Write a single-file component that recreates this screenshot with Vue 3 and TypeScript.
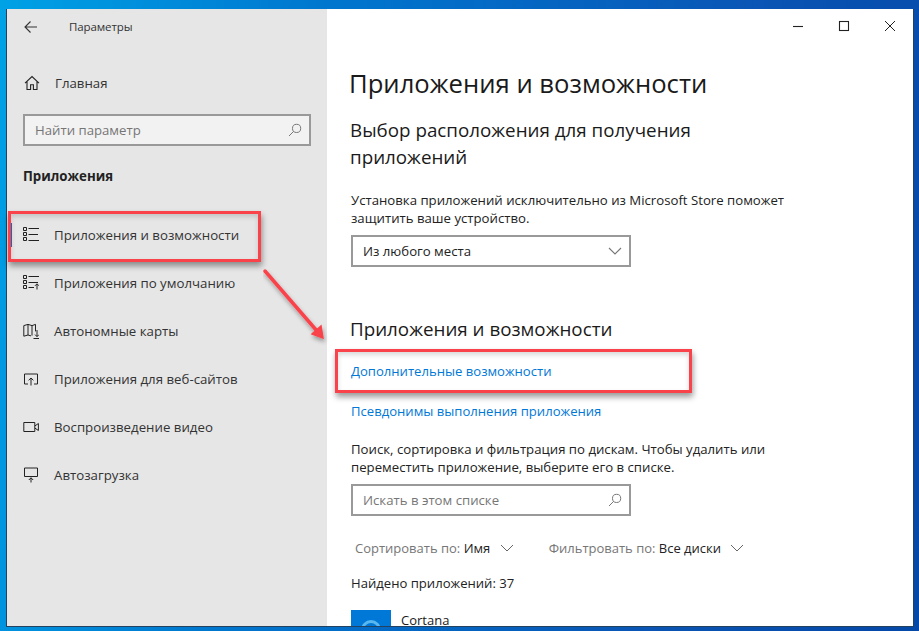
<script setup lang="ts">
const nav = [
  { label: 'Приложения и возможности', icon: 'list', active: true },
  { label: 'Приложения по умолчанию', icon: 'defaults', active: false },
  { label: 'Автономные карты', icon: 'map', active: false },
  { label: 'Приложения для веб-сайтов', icon: 'web', active: false },
  { label: 'Воспроизведение видео', icon: 'video', active: false },
  { label: 'Автозагрузка', icon: 'startup', active: false },
]
</script>

<template>
  <div class="desktop">
    <div class="window">
      <aside class="side">
        <div class="titlebar">
          <svg class="back" width="16" height="14" viewBox="0 0 16 14" fill="none" stroke="#333" stroke-width="1.1"><path d="M14 7H2M7.5 1.5 2 7l5.5 5.5" /></svg>
          <span class="apptitle">Параметры</span>
        </div>
        <div class="home">
          <svg class="ico" width="16" height="16" viewBox="0 0 16 16" fill="none" stroke="#222" stroke-width="1.1"><path d="M1 8.2 8 1.6l7 6.6M3 6.5V14.5h3.6V9.8h2.8v4.7H13V6.5" /></svg>
          <span>Главная</span>
        </div>
        <div class="search side-search">
          <span class="ph">Найти параметр</span>
          <svg width="14" height="14" viewBox="0 0 14 14" fill="none" stroke="#777" stroke-width="1"><circle cx="8.6" cy="5.4" r="4.1" /><path d="M5.7 8.3 1 13" /></svg>
        </div>
        <div class="group">Приложения</div>
        <nav class="nav">
          <div v-for="n in nav" :key="n.label" class="item" :class="{ active: n.active }">
            <span class="marker"></span>
            <svg class="ico" width="16" height="16" viewBox="0 0 16 16" fill="none" stroke="#222" stroke-width="1">
              <template v-if="n.icon === 'list'">
                <path d="M.5 .5h3v3h-3zM.5 5.5h3v3h-3zM.5 10.5h3v3h-3zM5.5 1.5H16M5.5 7.5H15M5.5 13.5H16" />
              </template>
              <template v-else-if="n.icon === 'defaults'">
                <path d="M.5 .5h3v3h-3zM.5 5.5h3v3h-3zM.5 10.5h3v3h-3zM5.5 1.5H16M5.5 7.5H15M5.5 12.5H11M14 14.5V9M12 10.8l2-2 2 2" />
              </template>
              <template v-else-if="n.icon === 'map'">
                <path d="M.8 2.6 5 1.4l4 1.2 3.5-1.2v7M.8 2.6v10.6L5 12l3 .9M5 1.4V12M9 2.6v10M14 7v6.5M12 11.6l2 2 2-2M10.5 15.5H16" />
              </template>
              <template v-else-if="n.icon === 'web'">
                <path d="M5 13H1.5V3h13v10H11M8 14.5V7M5.6 9.3 8 7l2.4 2.3" />
              </template>
              <template v-else-if="n.icon === 'video'">
                <path d="M.8 3.5h11v9H.8zM11.8 7 15.4 4.5v7L11.8 9" />
              </template>
              <template v-else>
                <path d="M1.5 1h13v8.5h-13zM8 15.5V10.8M5.8 13 8 10.8l2.2 2.2" />
              </template>
            </svg>
            <span>{{ n.label }}</span>
          </div>
        </nav>
      </aside>

      <main class="main">
        <div class="controls">
          <svg width="12" height="12" viewBox="0 0 12 12" stroke="#222" stroke-width="1.1"><path d="M1 6.5h10" /></svg>
          <svg width="12" height="12" viewBox="0 0 12 12" fill="none" stroke="#222" stroke-width="1.1"><rect x="1.5" y="1.5" width="9" height="9" /></svg>
          <svg width="12" height="12" viewBox="0 0 12 12" fill="none" stroke="#222" stroke-width="1"><path d="M1 1l10 10M11 1 1 11" /></svg>
        </div>
        <h1>Приложения и возможности</h1>
        <h2 class="h-choose">Выбор расположения для получения приложений</h2>
        <p class="p-store">Установка приложений исключительно из Microsoft Store поможет защитить ваше устройство.</p>
        <div class="search select">
          <span>Из любого места</span>
          <svg width="14" height="8" viewBox="0 0 14 8" fill="none" stroke="#777" stroke-width="1.1"><path d="M1 1l6 6 6-6" /></svg>
        </div>
        <h2 class="h-apps">Приложения и возможности</h2>
        <a class="link l1">Дополнительные возможности</a>
        <a class="link l2">Псевдонимы выполнения приложения</a>
        <p class="p-find">Поиск, сортировка и фильтрация по дискам. Чтобы удалить или переместить приложение, выберите его в списке.</p>
        <div class="search list-search">
          <span class="ph">Искать в этом списке</span>
          <svg width="14" height="14" viewBox="0 0 14 14" fill="none" stroke="#777" stroke-width="1"><circle cx="8.6" cy="5.4" r="4.1" /><path d="M5.7 8.3 1 13" /></svg>
        </div>
        <div class="filters">
          <span class="f"><span class="muted">Сортировать по:</span> Имя
            <svg width="14" height="8" viewBox="0 0 14 8" fill="none" stroke="#666" stroke-width="1"><path d="M1 1l6 6 6-6" /></svg></span>
          <span class="f"><span class="muted">Фильтровать по:</span> Все диски
            <svg width="14" height="8" viewBox="0 0 14 8" fill="none" stroke="#666" stroke-width="1"><path d="M1 1l6 6 6-6" /></svg></span>
        </div>
        <div class="found">Найдено приложений: 37</div>
        <div class="app">
          <div class="tile"><span class="ring"></span></div>
          <span class="appname">Cortana</span>
        </div>
      </main>
    </div>

    <div class="redbox box-a"></div>
    <div class="redbox box-b"></div>
    <svg class="arrow" width="100" height="90" viewBox="0 0 100 90">
      <defs>
        <filter id="sh" x="-20%" y="-20%" width="150%" height="150%"><feDropShadow dx="1" dy="3" stdDeviation="2" flood-color="#000" flood-opacity=".35" /></filter>
      </defs>
      <g filter="url(#sh)">
        <path d="M2 3 54 63" stroke="#f9424a" stroke-width="3.5" stroke-linecap="round" fill="none" />
        <path d="M60 70 49 66 58 58Z" fill="#f9424a" stroke="#f9424a" stroke-width="1.5" />
      </g>
    </svg>
  </div>
</template>

<style>
html, body { margin: 0; padding: 0; }
</style>

<style scoped>
.desktop {
  position: relative;
  width: 919px;
  height: 631px;
  overflow: hidden;
  padding: 9px 5px 4px 6px;
  box-sizing: border-box;
  background: linear-gradient(100deg, #00a2e6 0%, #0078d0 30%, #0a54b4 75%, #0448a8 100%);
  font-family: "Open Sans", "Noto Sans", sans-serif;
  color: #1a1a1a;
}
.window {
  display: flex;
  height: 100%;
  box-sizing: border-box;
  overflow: hidden;
  border: 1px solid #23425f;
  border-top: 0;
}
.side {
  width: 320px;
  flex: none;
  background: #e6e6e6;
  display: flex;
  flex-direction: column;
}
.titlebar {
  display: flex;
  align-items: center;
  height: 35px;
  padding-left: 16px;
}
.apptitle {
  margin-left: 30px;
  font-size: 11.5px;
  color: #333;
  letter-spacing: -.1px;
}
.home {
  display: flex;
  align-items: center;
  margin-top: 15px;
  height: 48px;
  padding-left: 17px;
  font-size: 13.25px;
  color: #333;
}
.home span { margin-left: 15px; }
.ico { flex: none; }
.search {
  display: flex;
  align-items: center;
  justify-content: space-between;
  height: 32px;
  box-sizing: border-box;
  border: 2px solid #999;
  padding: 0 7px 1px 10px;
  font-size: 13.2px;
}
.side-search {
  width: 288px;
  margin: 7px 0 0 16px;
  background: #f2f2f2;
}
.ph { color: #767676; }
.group {
  margin: 20px 0 0 16px;
  font-size: 13.25px;
  font-weight: 700;
  line-height: 20px;
  color: #222;
}
.nav { margin-top: 25px; }
.item {
  position: relative;
  display: flex;
  align-items: center;
  height: 48px;
  padding-left: 16px;
  font-size: 13.25px;
  color: #333;
}
.item span:last-child { margin-left: 15px; white-space: nowrap; }
.marker { display: none; }
.active .marker {
  display: block;
  position: absolute;
  left: 3px;
  top: 12px;
  width: 2px;
  height: 24px;
  background: #0078d7;
}
.main {
  flex: 1;
  position: relative;
  background: #fff;
  padding-left: 24px;
  min-width: 0;
}
.controls {
  position: absolute;
  top: 11px;
  right: 0;
  display: flex;
  gap: 34px;
  padding-right: 17px;
}
h1 {
  margin: 56px 0 0 -2px;
  font-size: 25.65px;
  font-weight: 400;
  line-height: 38px;
  color: #1a1a1a;
  white-space: nowrap;
}
h2 {
  font-weight: 400;
  font-size: 18.8px;
  line-height: 27px;
  margin: 0 0 0 -1px;
  color: #1a1a1a;
}
.h-choose { margin-top: 14px; width: 380px; }
p {
  margin: 0;
  font-size: 13.2px;
  line-height: 18px;
  color: #222;
  width: 460px;
}
.p-store { margin-top: 20px; }
.select {
  width: 280px;
  margin-top: 8px;
  background: #fff;
  color: #222;
}
.h-apps { margin-top: 48px; line-height: 28px; }
.link {
  display: block;
  font-size: 13.1px;
  line-height: 20px;
  color: #0078d7;
  white-space: nowrap;
}
.l1 { margin-top: 18px; }
.l2 { margin-top: 20px; }
.p-find { margin-top: 19px; }
.list-search { width: 280px; margin-top: 8px; }
.filters {
  display: flex;
  gap: 35px;
  margin: 22px 0 0 4px;
  font-size: 13px;
  line-height: 20px;
  color: #222;
}
.f svg { margin-left: 6px; vertical-align: 1px; }
.muted { color: #767676; }
.found {
  margin-top: 15px;
  font-size: 13.1px;
  line-height: 20px;
  color: #222;
}
.app { display: flex; margin-top: 17px; }
.tile {
  position: relative;
  width: 40px;
  height: 40px;
  background: #0078d7;
  overflow: hidden;
}
.ring {
  position: absolute;
  left: 10px;
  top: 10px;
  width: 20px;
  height: 20px;
  box-sizing: border-box;
  border: 3px solid #58b7ef;
  border-radius: 50%;
}
.appname { margin: 4px 0 0 10px; font-size: 13px; line-height: 12px; }
.redbox {
  position: absolute;
  box-sizing: border-box;
  border: 3px solid #f9424a;
  box-shadow: 1px 4px 6px rgba(0, 0, 0, .4), inset 0 3px 5px rgba(0, 0, 0, .15);
}
.box-a { left: 8px; top: 211px; width: 253px; height: 51px; }
.box-b { left: 335px; top: 349px; width: 357px; height: 44px; }
.arrow { position: absolute; left: 263px; top: 268px; }
</style>
